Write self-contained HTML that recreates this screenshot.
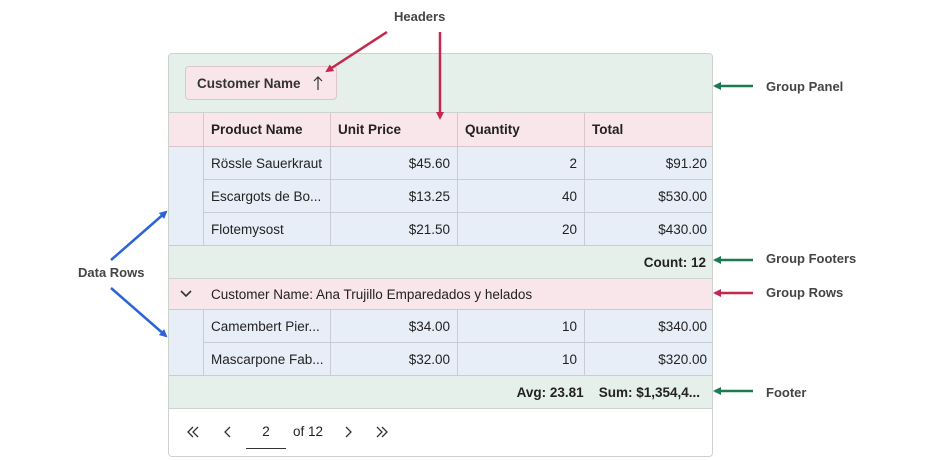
<!DOCTYPE html>
<html><head><meta charset="utf-8"><style>
*{box-sizing:border-box;margin:0;padding:0}
body{width:950px;height:460px;background:#fff;font-family:"Liberation Sans",sans-serif;font-size:13.5px;color:#222;position:relative;overflow:hidden}
.a{position:absolute}
.lbl{position:absolute;font-weight:bold;font-size:13px;color:#444}
.grid{position:absolute;left:168px;top:53px;width:545px;height:404px;border:1px solid #ccd3cf;border-radius:4px;overflow:hidden;background:#fff}
.row{position:absolute;left:0;width:545px;border-bottom:1px solid #c8ccd6}
.d{border-bottom:none}
.d::after{content:"";position:absolute;left:34px;right:0;bottom:0;height:1px;background:#c8ccd6;z-index:2}
.c{position:absolute;top:0;height:100%;display:flex;align-items:center;padding:0 7px;border-left:1px solid #c8ccd6;white-space:nowrap;overflow:hidden}
.r{justify-content:flex-end}
</style></head><body>
<div class="grid">
 <div class="row" style="top:0;height:59px;background:#e6f0ea;border-color:#cdd3d0">
  <div class="a" style="left:16px;top:12px;width:152px;height:34px;background:#f9e6ea;border:1px solid #dcc6cc;border-radius:4px;display:flex;align-items:center;padding-left:11px;font-weight:bold;color:#333">Customer Name
   <svg style="margin-left:12px" width="10" height="16"><path d="M5 15V2M1 6l4-4 4 4" fill="none" stroke="#333" stroke-width="1.2"/></svg></div>
 </div>
 <div class="row" style="top:59px;height:34px;background:#f9e6ea;font-weight:bold;border-color:#d8c6cc">
  <div class="c" style="left:34px;width:127px;border-color:#d8c6cc">Product Name</div>
  <div class="c" style="left:161px;width:127px;border-color:#d8c6cc">Unit Price</div>
  <div class="c" style="left:288px;width:127px;border-color:#d8c6cc">Quantity</div>
  <div class="c" style="left:415px;width:130px;border-color:#d8c6cc">Total</div>
 </div>
 <div class="row d" style="top:93px;height:33px;background:#e8eef8"><div class="c" style="left:34px;width:127px">Rössle Sauerkraut</div><div class="c r" style="left:161px;width:127px">$45.60</div><div class="c r" style="left:288px;width:127px">2</div><div class="c r" style="left:415px;width:130px">$91.20</div></div>
 <div class="row d" style="top:126px;height:33px;background:#e8eef8"><div class="c" style="left:34px;width:127px">Escargots de Bo...</div><div class="c r" style="left:161px;width:127px">$13.25</div><div class="c r" style="left:288px;width:127px">40</div><div class="c r" style="left:415px;width:130px">$530.00</div></div>
 <div class="row" style="top:159px;height:33px;background:#e8eef8"><div class="c" style="left:34px;width:127px">Flotemysost</div><div class="c r" style="left:161px;width:127px">$21.50</div><div class="c r" style="left:288px;width:127px">20</div><div class="c r" style="left:415px;width:130px">$430.00</div></div>
 <div class="row" style="top:192px;height:33px;background:#e6f0ea;border-color:#cdd3d0"><div class="a" style="right:8px;top:9px;font-weight:bold">Count: 12</div></div>
 <div class="row" style="top:225px;height:31px;background:#f9e6ea;border-color:#d8c6cc">
  <svg class="a" style="left:10px;top:10px" width="14" height="10"><path d="M2 2l5 5 5-5" fill="none" stroke="#333" stroke-width="1.6"/></svg>
  <div class="a" style="left:42px;top:8px">Customer Name: Ana Trujillo Emparedados y helados</div></div>
 <div class="row d" style="top:256px;height:33px;background:#e8eef8"><div class="c" style="left:34px;width:127px">Camembert Pier...</div><div class="c r" style="left:161px;width:127px">$34.00</div><div class="c r" style="left:288px;width:127px">10</div><div class="c r" style="left:415px;width:130px">$340.00</div></div>
 <div class="row" style="top:289px;height:33px;background:#e8eef8"><div class="c" style="left:34px;width:127px">Mascarpone Fab...</div><div class="c r" style="left:161px;width:127px">$32.00</div><div class="c r" style="left:288px;width:127px">10</div><div class="c r" style="left:415px;width:130px">$320.00</div></div>
 <div class="row" style="top:322px;height:33px;background:#e6f0ea;border-color:#cdd3d0"><div class="a" style="right:14px;top:9px;font-weight:bold">Avg: 23.81&nbsp;&nbsp;&nbsp;&nbsp;Sum: $1,354,4...</div></div>
 <svg class="a" style="left:0;top:355px" width="240" height="48" fill="none" stroke="#333" stroke-width="1.3">
  <path d="M24 18l-5 5 5 5M29 18l-5 5 5 5"/>
  <path d="M61 18l-5 5 5 5"/>
  <path d="M177 18l5 5-5 5"/>
  <path d="M208 18l5 5-5 5M213 18l5 5-5 5"/>
 </svg>
 <div class="a" style="left:77px;top:370px;width:40px;height:25px;border-bottom:1px solid #333;text-align:center">2</div>
 <div class="a" style="left:124px;top:370px">of 12</div>
</div>
<div class="lbl" style="left:394px;top:9px">Headers</div>
<div class="lbl" style="left:766px;top:79px">Group Panel</div>
<div class="lbl" style="left:766px;top:251px">Group Footers</div>
<div class="lbl" style="left:766px;top:285px">Group Rows</div>
<div class="lbl" style="left:766px;top:385px">Footer</div>
<div class="lbl" style="left:78px;top:265px">Data Rows</div>
<svg class="a" style="left:0;top:0" width="950" height="460">
<defs>
<marker id="mr" markerWidth="8" markerHeight="8" refX="6" refY="4" orient="auto" markerUnits="userSpaceOnUse"><path d="M0 0L8 4L0 8z" fill="#c4284c"/></marker>
<marker id="mg" markerWidth="8" markerHeight="8" refX="6" refY="4" orient="auto" markerUnits="userSpaceOnUse"><path d="M0 0L8 4L0 8z" fill="#1a7a50"/></marker>
<marker id="mb" markerWidth="8" markerHeight="8" refX="6" refY="4" orient="auto" markerUnits="userSpaceOnUse"><path d="M0 0L8 4L0 8z" fill="#2a64d6"/></marker>
</defs>
<g stroke-width="2.5" fill="none">
<path d="M387 32L327 71" stroke="#c4284c" marker-end="url(#mr)"/>
<path d="M440 32L440 118" stroke="#c4284c" marker-end="url(#mr)"/>
<path d="M753 293L715 293" stroke="#c4284c" marker-end="url(#mr)"/>
<path d="M753 86L715 86" stroke="#1a7a50" marker-end="url(#mg)"/>
<path d="M753 260L715 260" stroke="#1a7a50" marker-end="url(#mg)"/>
<path d="M753 391L715 391" stroke="#1a7a50" marker-end="url(#mg)"/>
<path d="M111 260L166 212" stroke="#2a64d6" marker-end="url(#mb)"/>
<path d="M111 288L166 336" stroke="#2a64d6" marker-end="url(#mb)"/>
</g></svg>
</body></html>
